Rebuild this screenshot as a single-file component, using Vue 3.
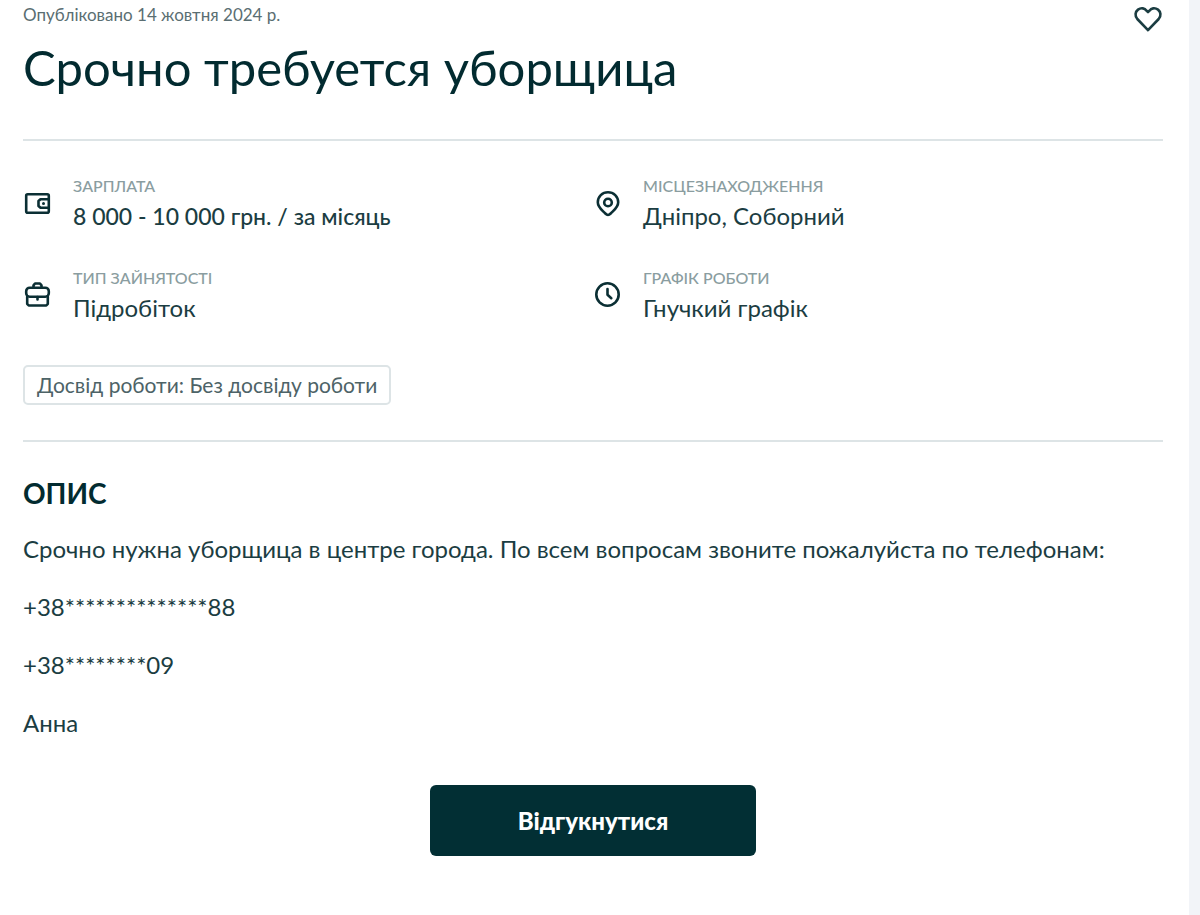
<script setup>
import { ref } from 'vue'

const saved = ref(false)
const details = [
  { icon: 'wallet', label: 'Зарплата', value: '8 000 - 10 000 грн. / за місяць', strong: true },
  { icon: 'pin', label: 'Місцезнаходження', value: 'Дніпро, Соборний' },
  { icon: 'briefcase', label: 'Тип зайнятості', value: 'Підробіток' },
  { icon: 'clock', label: 'Графік роботи', value: 'Гнучкий графік' },
]
const paragraphs = [
  'Срочно нужна уборщица в центре города. По всем вопросам звоните пожалуйста по телефонам:',
  '+38**************88',
  '+38********09',
  'Анна',
]
</script>

<template>
  <main class="page">
    <article class="card">
      <header class="head">
        <div class="heading">
          <p class="date">Опубліковано 14 жовтня 2024 р.</p>
          <h1 class="title">Срочно требуется уборщица</h1>
        </div>
        <button class="save" type="button" aria-label="Зберегти" :aria-pressed="saved" @click="saved = !saved">
          <svg viewBox="0 0 30 32" width="30" height="32" :fill="saved ? 'currentColor' : 'none'" stroke="currentColor" stroke-width="2.6" stroke-linejoin="round">
            <path d="M15 27.200 L4.300 16 C1.600 13 2.200 8.700 5 6.600 C8.200 4.400 11.800 5.200 13.500 7.700 L15 9.200 L16.500 7.700 C18.200 5.200 21.800 4.400 25 6.600 C27.800 8.700 28.400 13 25.700 16 Z" />
          </svg>
        </button>
      </header>

      <dl class="details">
        <div v-for="item in details" :key="item.icon" class="detail">
          <svg class="icon" viewBox="0 0 30 30" width="30" height="30" fill="none" stroke="currentColor" stroke-width="2.6" stroke-linejoin="round" stroke-linecap="round" aria-hidden="true">
            <template v-if="item.icon === 'wallet'">
              <rect x="3.200" y="6.200" width="22.600" height="18.600" rx="1.500" />
              <path d="M25.500 11.200 H17.500 L15.500 13 V18 L17.500 19.800 H25.500" />
              <circle cx="20.500" cy="15.500" r="1.500" fill="currentColor" stroke="none" />
            </template>
            <template v-else-if="item.icon === 'pin'">
              <path d="M15 27 C13.500 27 12.800 26 11.500 24.700 C8 21.200 4.800 18.800 4.800 14.200 C4.800 8.500 9.300 4.200 15 4.200 C20.700 4.200 25.200 8.500 25.200 14.200 C25.200 18.800 22 21.200 18.500 24.700 C17.200 26 16.500 27 15 27 Z" />
              <circle cx="15" cy="14.500" r="3.800" />
            </template>
            <template v-else-if="item.icon === 'briefcase'">
              <path d="M10.500 7.500 V5.300 L12 3.500 H17 L18.500 5.300 V7.500" />
              <rect x="3.200" y="7.700" width="22.600" height="9" rx="3.500" />
              <path d="M4.200 16.500 V23.800 L5.700 25.500 H23.300 L24.800 23.800 V16.500 M14.500 17 V19.500" />
            </template>
            <template v-else>
              <circle cx="14.500" cy="14.500" r="11.200" />
              <path d="M14.500 9 V14.800 L18.300 18.200" />
            </template>
          </svg>
          <div class="detail-text">
            <dt class="label">{{ item.label }}</dt>
            <dd class="value" :class="{ strong: item.strong }">{{ item.value }}</dd>
          </div>
        </div>
      </dl>

      <ul class="tags">
        <li class="tag">Досвід роботи: Без досвіду роботи</li>
      </ul>

      <section class="description">
        <h2 class="subtitle">Опис</h2>
        <p v-for="text in paragraphs" :key="text" class="paragraph">{{ text }}</p>
      </section>

      <div class="actions">
        <button class="apply" type="button">Відгукнутися</button>
      </div>
    </article>
  </main>
</template>

<style>
body {
  margin: 0;
  background: #f2f4f8;
}
</style>

<style scoped>
.page {
  min-height: 100vh;
  display: flex;
  padding-right: 11px;
  box-sizing: border-box;
  font-family: Lato, "Open Sans", sans-serif;
  color: #1b3d42;
}
.card {
  flex: 1;
  min-width: 0;
  box-sizing: border-box;
  padding: 3px 26px 56px 23px;
  background: #fff;
}
.head {
  display: flex;
  justify-content: space-between;
  align-items: flex-start;
  gap: 16px;
  padding-bottom: 44px;
  border-bottom: 2px solid #dde4e6;
}
.date {
  margin: 0;
  font-size: 17px;
  line-height: 24px;
  color: #5a6e72;
}
.title {
  margin: 12px 0 0;
  font-size: 49px;
  line-height: 56px;
  font-weight: 400;
  color: #022b30;
}
.save {
  flex: none;
  display: flex;
  padding: 0;
  border: 0;
  background: none;
  color: #1b3d42;
  cursor: pointer;
}
.details {
  display: grid;
  grid-template-columns: 1fr 1fr;
  gap: 32px 0;
  margin: 32px 0 0;
}
.detail {
  display: flex;
  align-items: center;
  gap: 20px;
}
.icon {
  flex: none;
  color: #0b2f34;
}
.label {
  font-size: 16px;
  line-height: 26px;
  font-weight: 500;
  text-transform: uppercase;
  color: #8a9da0;
}
.value {
  margin: 0;
  font-size: 24px;
  line-height: 34px;
}
.strong {
  font-size: 23px;
  font-weight: 500;
}
.tags {
  display: flex;
  flex-wrap: wrap;
  gap: 8px;
  margin: 40px 0 0;
  padding: 0 0 35px;
  list-style: none;
  border-bottom: 2px solid #dde4e6;
}
.tag {
  padding: 4px 12px;
  border: 2px solid #dde4e6;
  border-radius: 5px;
  font-size: 21px;
  line-height: 28px;
  color: #4d6367;
}
.subtitle {
  margin: 33px 0 0;
  font-size: 28px;
  line-height: 36px;
  text-transform: uppercase;
  color: #022b30;
}
.paragraph {
  margin: 26px 0 0;
  font-size: 24px;
  line-height: 32px;
}
.subtitle + .paragraph {
  margin-top: 22px;
}
.actions {
  display: flex;
  justify-content: center;
  margin-top: 46px;
}
.apply {
  min-width: 326px;
  padding: 20px 32px;
  border: 0;
  border-radius: 6px;
  background: #022f34;
  color: #fff;
  font: 900 24px/31px Lato, "Open Sans", sans-serif;
  cursor: pointer;
}
</style>
